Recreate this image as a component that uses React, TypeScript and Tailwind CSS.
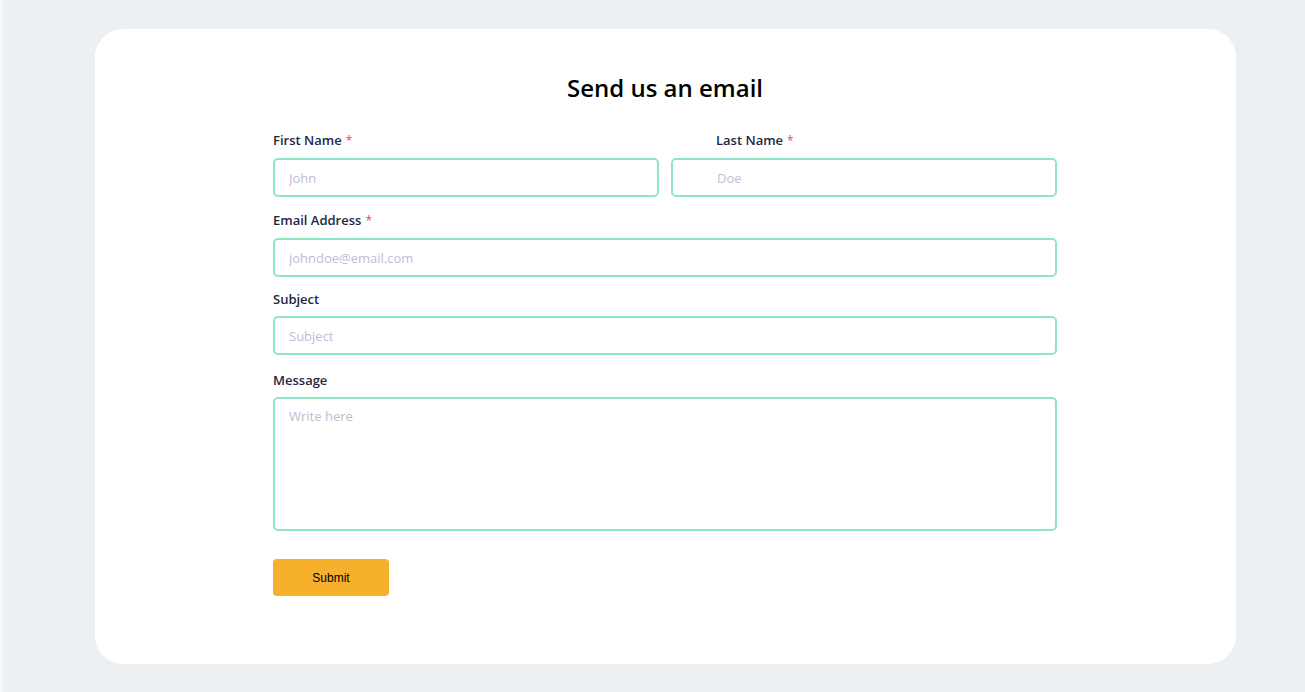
import type { ReactNode } from 'react'

const font = { fontFamily: '"Open Sans", "DejaVu Sans", sans-serif' }

function Label({ children, required, className = '' }: { children: ReactNode; required?: boolean; className?: string }) {
  return (
    <label className={`mb-[7px] block text-[13px] leading-[20px] font-semibold text-[#1f2744] ${className}`}>
      {children}
      {required && <span className="ml-1 text-[12px] font-normal text-[#f43f5e]">*</span>}
    </label>
  )
}

const inputCls =
  'block h-[39px] w-full rounded-[5px] border-2 border-[#8ee6c8] bg-white pr-3 text-[13px] text-[#1f2744] outline-none placeholder:text-[#bdbdd3]'

export default function App() {
  return (
    <div className="min-h-[692px] border-l-[3px] border-[#f6f7f9] bg-[#edf0f3] pt-[29px] pb-[28px]" style={font}>
      <div className="ml-[92px] flex h-[635px] w-[1141px] flex-col rounded-[28px] bg-white">
        <form className="ml-[178px] w-[784px] pt-[43px]" onSubmit={(e) => e.preventDefault()}>
          <h2 className="mb-[27px] text-center text-[24px] leading-[31px] font-semibold text-black">Send us an email</h2>

          <div className="flex gap-3">
            <div className="flex-1">
              <Label required>First Name</Label>
              <input className={`${inputCls} pl-[14px]`} placeholder="John" />
            </div>
            <div className="flex-1">
              <Label required className="pl-[45px]">
                Last Name
              </Label>
              <input className={`${inputCls} pl-[44px]`} placeholder="Doe" />
            </div>
          </div>

          <div className="mt-[13px]">
            <Label required>Email Address</Label>
            <input className={`${inputCls} pl-[14px]`} placeholder="johndoe@email.com" />
          </div>

          <div className="mt-[12px]">
            <Label>Subject</Label>
            <input className={`${inputCls} pl-[14px]`} placeholder="Subject" />
          </div>

          <div className="mt-[15px]">
            <Label>Message</Label>
            <textarea
              className="block h-[134px] w-full resize-none rounded-[5px] border-2 border-[#8ee6c8] bg-white px-[14px] pt-[8px] text-[13px] text-[#1f2744] outline-none placeholder:text-[#bdbdd3]"
              placeholder="Write here"
            />
          </div>

          <button
            type="submit"
            className="mt-[28px] h-[37px] w-[116px] rounded-[4px] bg-[#f6b02c] text-[12px] text-black"
            style={{ fontFamily: '"Liberation Sans", Arial, sans-serif' }}
          >
            Submit
          </button>
        </form>
      </div>
    </div>
  )
}
